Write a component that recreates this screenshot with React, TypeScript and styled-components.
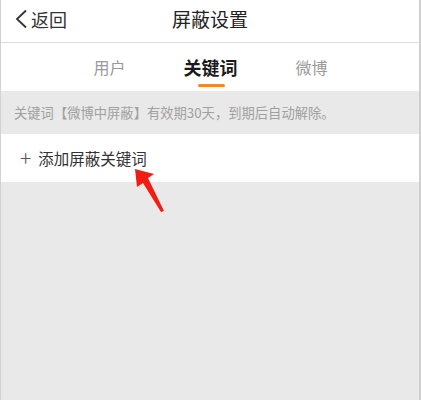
import styled, { createGlobalStyle } from 'styled-components'

const GlobalStyle = createGlobalStyle`
  html, body {
    margin: 0;
    padding: 0;
    background: #e9e9e9;
  }
  body {
    font-family: "Noto Sans CJK SC", "Noto Sans", sans-serif;
  }
`

const tabs = ['用户', '关键词', '微博']
const activeTab = 1

const App = () => {
  return (
    <Page>
      <GlobalStyle />
      <NavBar>
        <BackButton>
          <svg width="14" height="20" viewBox="0 0 14 20">
            <path d="M12 1.5 L3 10 L12 18.5" fill="none" stroke="#333" strokeWidth="1.8" />
          </svg>
          <span>返回</span>
        </BackButton>
        <NavTitle>屏蔽设置</NavTitle>
      </NavBar>
      <TabBar>
        {tabs.map((t, i) => (
          <Tab key={t} $active={i === activeTab}>
            {t}
          </Tab>
        ))}
      </TabBar>
      <Notice>关键词【微博中屏蔽】有效期30天，到期后自动解除。</Notice>
      <AddRow>
        <Plus>+</Plus>
        <AddLabel>添加屏蔽关键词</AddLabel>
        <Pointer width="40" height="50" viewBox="0 0 40 50">
          <polygon points="3,2 22,7 16,11 32,44 29,45 11,16 5,20" fill="#f21d12" />
        </Pointer>
      </AddRow>
      <Rest />
    </Page>
  )
}

const Page = styled.div`
  display: flex;
  flex-direction: column;
  height: 100vh;
  box-sizing: border-box;
  border-left: 1px solid #d2d2d2;
  border-right: 2px solid #d0d0d0;
  background: #e9e9e9;
  overflow: hidden;
`
const NavBar = styled.div`
  position: relative;
  height: 42px;
  background: #fff;
  border-bottom: 1px solid #dedede;
  display: flex;
  align-items: center;
  justify-content: center;
`
const BackButton = styled.div`
  position: absolute;
  left: 13px;
  top: 0;
  height: 38px;
  display: flex;
  align-items: center;
  gap: 3px;
  font-size: 18px;
  color: #333;
  svg {
    display: block;
  }
`
const NavTitle = styled.div`
  font-size: 19px;
  color: #222;
  margin-top: -5px;
`
const TabBar = styled.div`
  height: 48px;
  background: #fff;
  display: flex;
  justify-content: center;
  padding-left: 1px;
`
const Tab = styled.div<{ $active: boolean }>`
  position: relative;
  width: 101px;
  display: flex;
  justify-content: center;
  padding-top: 11px;
  font-size: ${p => (p.$active ? '18px' : '16px')};
  font-weight: ${p => (p.$active ? 700 : 400)};
  color: ${p => (p.$active ? '#1a1a1a' : '#9a9a9a')};
  line-height: 26px;
  &::after {
    content: '';
    display: ${p => (p.$active ? 'block' : 'none')};
    position: absolute;
    left: 50%;
    bottom: 4px;
    width: 27px;
    height: 3px;
    margin-left: -13px;
    border-radius: 2px;
    background: #f0892a;
  }
`
const Notice = styled.div`
  height: 43px;
  display: flex;
  align-items: center;
  padding-left: 13px;
  font-size: 13.3px;
  color: #a0a0a0;
  background: #e9e9e9;
`
const AddRow = styled.div`
  position: relative;
  height: 48px;
  background: #fff;
  display: flex;
  align-items: center;
  padding-left: 19px;
  gap: 7px;
  color: #333;
`
const Plus = styled.span`
  font-size: 21px;
  font-weight: 300;
  color: #555;
  margin-top: -2px;
`
const AddLabel = styled.span`
  font-size: 15.5px;
`
const Pointer = styled.svg`
  position: absolute;
  left: 131px;
  top: 33px;
  z-index: 2;
`
const Rest = styled.div`
  flex: 1;
  background: #e9e9e9;
`

export default App
